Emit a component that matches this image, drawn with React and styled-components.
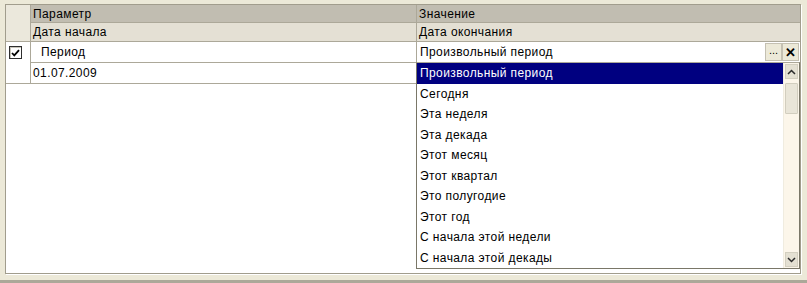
import React from "react";
import styled, { createGlobalStyle } from "styled-components";

const GlobalStyle = createGlobalStyle`
  html, body {
    margin: 0;
    padding: 0;
    background: #ece9d8;
  }
  body {
    font-family: "Liberation Sans", Arial, sans-serif;
    font-size: 12px;
    color: #000;
  }
`;

const Window = styled.div`
  width: 807px;
  height: 283px;
  overflow: hidden;
  padding-top: 4px;
  box-sizing: border-box;
`;

const Panel = styled.div`
  position: relative;
  margin-left: 5px;
  width: 796px;
  height: 270px;
  box-sizing: border-box;
  border: 1px solid #a19d8d;
  background: #fff;
  box-shadow: 1px 1px 0 #fff;
`;

const Grid = styled.div`
  display: grid;
  grid-template-columns: 25px 386px 1fr;
  grid-template-rows: 18px 19px 21px 21px;
`;

const Cell = styled.div`
  box-sizing: border-box;
  display: flex;
  align-items: center;
  padding-left: ${(p) => p.$indent || 2}px;
  border-bottom: 1px solid #aca899;
  border-right: ${(p) => (p.$last ? "none" : "1px solid #aca899")};
  background: ${(p) => p.$bg || "#fff"};
  grid-row: ${(p) => p.$row || "auto"};
  white-space: nowrap;
  letter-spacing: 0.4px;
  position: relative;
`;

const CheckCell = styled(Cell)`
  align-items: flex-start;
  padding: 4px 0 0 3px;
`;

const CheckBox = styled.div`
  width: 13px;
  height: 13px;
  box-sizing: border-box;
  border: 1px solid #2e2e2e;
  background: #fff;
  box-shadow: inset 1px 1px 0 #c9c6bb;
  display: flex;
  align-items: center;
  justify-content: center;
`;

const EditCell = styled(Cell)`
  padding: 1px 1px 1px 3px;
`;

const EditText = styled.div`
  flex: 1;
`;

const EditButton = styled.div`
  width: 17px;
  height: 18px;
  box-sizing: border-box;
  background: #ece9d8;
  border: 1px solid #c4c0b2;
  display: flex;
  align-items: ${(p) => (p.$bold ? "center" : "flex-end")};
  justify-content: center;
  padding-bottom: ${(p) => (p.$bold ? 0 : 4)}px;
  font-weight: ${(p) => (p.$bold ? 700 : 400)};
  font-size: ${(p) => (p.$bold ? 13 : 11)}px;
  letter-spacing: 0;
  line-height: 1;
`;

const Dropdown = styled.div`
  position: absolute;
  left: -1px;
  top: 20px;
  width: 384px;
  height: 207px;
  box-sizing: border-box;
  background: #fff;
  border: 1px solid #7a7768;
  border-top-color: #aca899;
  display: flex;
  z-index: 2;
`;

const List = styled.div`
  flex: 1;
  display: flex;
  flex-direction: column;
`;

const Item = styled.div`
  height: 20.5px;
  display: flex;
  align-items: center;
  padding-left: 3px;
  letter-spacing: 0.4px;
  background: ${(p) => (p.$selected ? "#000080" : "transparent")};
  color: ${(p) => (p.$selected ? "#fff" : "#000")};
`;

const ScrollBar = styled.div`
  width: 16px;
  background: #fcf6ea;
  border-left: 1px solid #f0ece0;
  display: flex;
  flex-direction: column;
  padding: 1px;
  box-sizing: border-box;
`;

const ScrollButton = styled.div`
  height: 15px;
  box-sizing: border-box;
  background: #e4e0d2;
  border: 1px solid #d3cfc0;
  display: flex;
  align-items: center;
  justify-content: center;
  margin-top: ${(p) => (p.$bottom ? "auto" : "0")};
`;

const Thumb = styled.div`
  margin-top: 4px;
  height: 31px;
  box-sizing: border-box;
  background: #e9e5d8;
  border: 1px solid #d2cebf;
  border-radius: 1px;
`;

const Footer = styled.div`
  margin-top: 6px;
  height: 4px;
  background: #aca899;
`;

const Chevron = ({ up }) => (
  <svg width="9" height="6" viewBox="0 0 9 6">
    <path
      d={up ? "M1 5 L4.5 1.5 L8 5" : "M1 1 L4.5 4.5 L8 1"}
      fill="none"
      stroke="#2b2b2b"
      strokeWidth="1.5"
    />
  </svg>
);

const items = [
  "Произвольный период",
  "Сегодня",
  "Эта неделя",
  "Эта декада",
  "Этот месяц",
  "Этот квартал",
  "Это полугодие",
  "Этот год",
  "С начала этой недели",
  "С начала этой декады",
];

const App = () => {
  return (
    <>
      <GlobalStyle />
      <Window>
        <Panel>
          <Grid>
            <Cell $bg="#ebe8dc" $row="1 / span 2" />
            <Cell $bg="#c1bdb1">Параметр</Cell>
            <Cell $bg="#c1bdb1" $last>
              Значение
            </Cell>
            <Cell $bg="#e4e0d4">Дата начала</Cell>
            <Cell $bg="#e4e0d4" $last>
              Дата окончания
            </Cell>

            <CheckCell $row="3 / span 2">
              <CheckBox>
                <svg width="9" height="8" viewBox="0 0 9 8">
                  <path
                    d="M1 4 L3.3 6.4 L8 1.2"
                    fill="none"
                    stroke="#000"
                    strokeWidth="1.8"
                  />
                </svg>
              </CheckBox>
            </CheckCell>
            <Cell $indent={10}>Период</Cell>
            <EditCell $last>
              <EditText>Произвольный период</EditText>
              <EditButton>...</EditButton>
              <EditButton $bold>✕</EditButton>
              <Dropdown>
                <List>
                  {items.map((t, i) => (
                    <Item key={t} $selected={i === 0}>
                      {t}
                    </Item>
                  ))}
                </List>
                <ScrollBar>
                  <ScrollButton>
                    <Chevron up />
                  </ScrollButton>
                  <Thumb />
                  <ScrollButton $bottom>
                    <Chevron />
                  </ScrollButton>
                </ScrollBar>
              </Dropdown>
            </EditCell>
            <Cell>01.07.2009</Cell>
            <Cell $last />
          </Grid>
        </Panel>
        <Footer />
      </Window>
    </>
  );
};

export default App;
